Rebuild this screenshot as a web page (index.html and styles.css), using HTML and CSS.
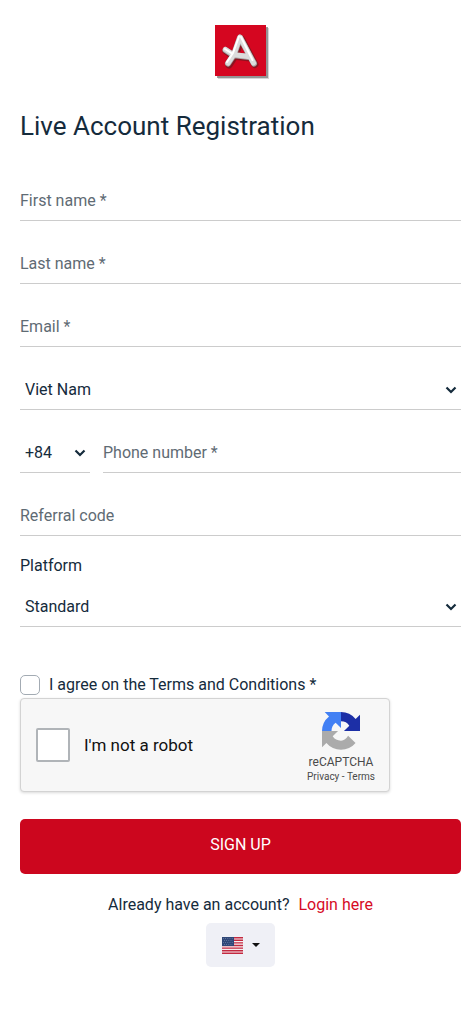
FILE: index.html
```html
<!DOCTYPE html>
<html lang="en">
<head>
<meta charset="utf-8">
<meta name="viewport" content="width=device-width, initial-scale=1">
<title>Live Account Registration</title>
<link rel="stylesheet" href="styles.css">
</head>
<body>
<main class="page">
  <header class="brand">
    <svg class="logo" viewBox="0 0 51 51" role="img" aria-label="Company logo">
      <rect x="3" y="3" width="51" height="51" fill="#777" opacity=".3"/>
      <rect x="2" y="2" width="51" height="51" fill="#777" opacity=".7"/>
      <rect width="51" height="51" fill="#d50620"/>
      <g fill="none" stroke-linecap="round" stroke-linejoin="round">
        <path d="M14 40 20 31 26.500 14 40 39.500M11 26 18 31 35 33" stroke="#8c1420" stroke-width="7"/>
        <path d="M13 38.500 19 29.500 25 12.500 39 38.500M10.500 25 18 30 34 32" stroke="#a4a4a4" stroke-width="6"/>
        <path d="M13 38 19 29 25 12 38.500 38M10.500 24.500 18 29.500 33 31.500" stroke="#dcdcdc" stroke-width="5"/>
        <path d="M12 37 18 28 24 11.500M26 12 37.500 35M10 24 17 28.500" stroke="#fff" stroke-width="2"/>
      </g>
    </svg>
  </header>
  <h1 class="title">Live Account Registration</h1>
  <form class="form">
    <div class="fields">
      <input class="control" type="text" placeholder="First name *" aria-label="First name">
      <input class="control" type="text" placeholder="Last name *" aria-label="Last name">
      <input class="control" type="email" placeholder="Email *" aria-label="Email">
      <select class="control select" aria-label="Country"><option>Viet Nam</option></select>
      <div class="phone">
        <select class="control select" aria-label="Country code"><option>+84</option></select>
        <input class="control" type="tel" placeholder="Phone number *" aria-label="Phone number">
      </div>
      <input class="control" type="text" placeholder="Referral code" aria-label="Referral code">
    </div>
    <label class="label" for="platform">Platform</label>
    <select class="control select" id="platform"><option>Standard</option></select>
    <div class="agree">
      <input class="check" type="checkbox" id="agree">
      <label for="agree">I agree on the Terms and Conditions *</label>
    </div>
    <div class="captcha">
      <input class="captcha-check" type="checkbox" id="robot">
      <label class="captcha-label" for="robot">I'm not a robot</label>
      <div class="captcha-brand">
        <svg class="captcha-logo" viewBox="0 0 64 64" aria-hidden="true">
          <path fill="#1c2fa6" d="M32 0A32 32 0 0 1 56.600 11.800L64 4.500V32H37L46 23C43 18 38 15.500 32 15.500z"/>
          <path fill="#4280f4" d="M32 0H4.500L11.800 7.400A32 32 0 0 0 0 32H16C16 26 18.500 21 23 18L32 27z"/>
          <path fill="#ababab" d="M0 32V59.500L7.400 52.200A32 32 0 0 0 56.500 52L44 40C41 45 37 48 32 48.500C26 48 21 46 18 41L27 32z"/>
        </svg>
        <div class="captcha-name">reCAPTCHA</div>
        <div class="captcha-links"><a href="#privacy">Privacy</a> - <a href="#terms">Terms</a></div>
      </div>
    </div>
    <button class="submit" type="submit">SIGN UP</button>
  </form>
  <footer class="footer">
    <p class="login"><span>Already have an account?</span><a href="#login">Login here</a></p>
    <button class="language" type="button" aria-label="Language: English">
      <svg class="flag" viewBox="0 0 21 17" aria-hidden="true">
        <rect width="21" height="17" fill="#f6eef0"/>
        <path stroke="#c32940" stroke-width="1.400" d="M0 .7h21M0 3.300h21M0 5.900h21M0 8.500h21M0 11.100h21M0 13.700h21M0 16.300h21"/>
        <rect width="12" height="9" fill="#2f4778"/>
        <path stroke="#8293b3" stroke-width=".7" stroke-dasharray=".8 1.400" d="M1 1.500h10M2 3.500h9M1 5.500h10M2 7.500h9"/>
      </svg>
      <svg class="caret" viewBox="0 0 8 4" aria-hidden="true"><path fill="#111" d="M0 0h8L4 4z"/></svg>
    </button>
  </footer>
</main>
</body>
</html>
```
FILE: styles.css
```css
* {
  box-sizing: border-box;
}

body {
  margin: 0;
  background: #fff;
  color: #152b3c;
  font: 16px/22px Roboto, "Liberation Sans", sans-serif;
}

.page {
  padding: 25px 12px 24px 20px;
}

.brand {
  display: flex;
  justify-content: center;
}

.logo {
  width: 51px;
  height: 51px;
  overflow: visible;
}

.title {
  margin: 33px 0 39px;
  font-size: 26px;
  font-weight: 400;
  line-height: 34px;
}

.form,
.fields {
  display: flex;
  flex-direction: column;
}

.fields {
  gap: 24px;
}

.control {
  width: 100%;
  min-width: 0;
  height: 39px;
  margin: 0;
  padding: 0 0 2px;
  border: 0;
  border-bottom: 1px solid #ccc;
  border-radius: 0;
  background: transparent;
  color: inherit;
  font: inherit;
}

.control::placeholder {
  color: #5f6b74;
  opacity: 1;
}

.select {
  padding: 0 20px 0 5px;
  appearance: none;
  background: url("data:image/svg+xml,%3Csvg xmlns='http://www.w3.org/2000/svg' viewBox='0 0 12 8'%3E%3Cpath d='M1.500 1.500 6 6l4.500-4.500' fill='none' stroke='%23152b3c' stroke-width='2.200'/%3E%3C/svg%3E") right 4px center / 12px 8px no-repeat;
}

.phone {
  display: grid;
  grid-template-columns: 70px 1fr;
  gap: 13px;
}

.label {
  margin: 19px 0 11px;
}

.agree {
  display: flex;
  align-items: center;
  gap: 9px;
  margin-top: 47px;
}

.check,
.captcha-check {
  flex: none;
  margin: 0;
  appearance: none;
  background: #fff;
}

.check {
  width: 20px;
  height: 20px;
  border: 1px solid #a3abb3;
  border-radius: 5px;
}

.captcha {
  display: flex;
  align-items: center;
  width: 100%;
  max-width: 370px;
  height: 94px;
  margin-top: 2px;
  padding: 0 14px 0 15px;
  border: 1px solid #d3d3d3;
  border-radius: 4px;
  background: #f7f7f7;
  box-shadow: 0 1px 3px rgba(0, 0, 0, 0.15);
  color: #111;
}

.captcha-check {
  width: 34px;
  height: 34px;
  border: 2px solid #b0b4b8;
  border-radius: 2px;
}

.captcha-label {
  flex: 1;
  margin-left: 14px;
  font-size: 17px;
}

.captcha-brand {
  display: flex;
  flex-direction: column;
  align-items: center;
  padding-top: 5px;
  color: #4a4a4a;
}

.captcha-logo {
  width: 38px;
  height: 38px;
}

.captcha-name {
  margin-top: 5px;
  font-size: 12px;
  line-height: 15px;
}

.captcha-links {
  font-size: 10px;
  line-height: 13px;
}

.captcha-links a {
  color: inherit;
  text-decoration: none;
}

.submit {
  height: 55px;
  margin-top: 27px;
  padding: 0 0 3px;
  border: 0;
  border-radius: 5px;
  background: #cc061e;
  color: #fff;
  font: inherit;
}

.footer {
  display: flex;
  flex-direction: column;
  align-items: center;
  margin-top: 20px;
}

.login {
  display: flex;
  gap: 9px;
  margin: 0;
}

.login a {
  color: #d60b25;
  text-decoration: none;
}

.language {
  display: flex;
  align-items: center;
  gap: 9px;
  height: 44px;
  margin-top: 7px;
  padding: 0 15px 0 16px;
  border: 0;
  border-radius: 5px;
  background: #eff0f6;
}

.flag {
  width: 21px;
  height: 17px;
}

.caret {
  width: 8px;
  height: 4px;
}
```
